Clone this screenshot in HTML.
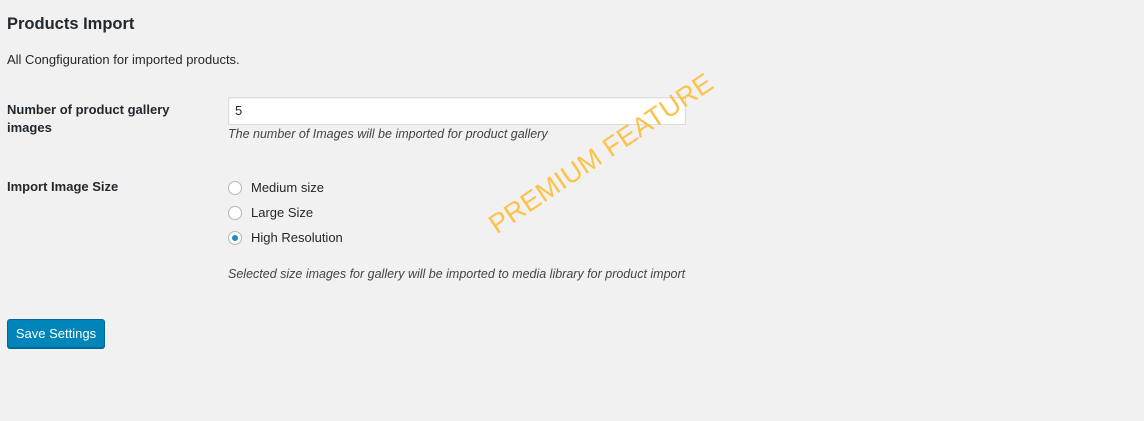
<!DOCTYPE html>
<html><head><meta charset="utf-8"><style>
body{margin:0;width:1144px;height:421px;background:#f1f1f1;font-family:"Liberation Sans",sans-serif;color:#23282d;position:relative;overflow:hidden;font-size:13px}
.a{position:absolute;white-space:nowrap}
h1{position:absolute;left:7px;top:15px;margin:0;font-size:16.5px;font-weight:600;color:#23282d}
.lbl{font-weight:bold;font-size:13px;line-height:18px;color:#23282d}
.desc{font-style:italic;font-size:12.5px;color:#444}
.inp{position:absolute;left:228px;top:97px;width:456px;height:26px;background:#fff;border:1px solid #ddd;box-shadow:inset 0 1px 2px rgba(0,0,0,.07)}
.r{position:absolute;left:228px;width:14px;height:14px;border-radius:50%;border:1px solid #b4b9be;background:#fff;box-sizing:border-box}
.btn{position:absolute;left:7px;top:319px;width:98px;height:29px;background:#0085ba;border:1px solid #006799;border-radius:3px;box-sizing:border-box;color:#fff;font-size:13px;text-align:center;line-height:27px;box-shadow:0 1px 0 #006799}
.wm{position:absolute;left:492px;color:#fcc24a;font-size:27px;transform:rotate(-34deg);transform-origin:left center;white-space:nowrap;letter-spacing:0.3px}
</style></head><body>
<h1>Products Import</h1>
<div class="a" style="left:7px;top:52px">All Congfiguration for imported products.</div>
<div class="a lbl" style="left:7px;top:101px">Number of product gallery<br>images</div>
<div class="inp"></div>
<div class="a" style="left:235px;top:103px;font-size:13px">5</div>
<div class="a desc" style="left:228px;top:127px">The number of Images will be imported for product gallery</div>
<div class="a lbl" style="left:7px;top:178px">Import Image Size</div>
<div class="r" style="top:181px"></div><div class="a" style="left:251px;top:180px">Medium size</div>
<div class="r" style="top:206px"></div><div class="a" style="left:251px;top:205px">Large Size</div>
<div class="r" style="top:231px"><div style="position:absolute;left:3px;top:3px;width:6px;height:6px;border-radius:50%;background:#1e8cbe"></div></div><div class="a" style="left:251px;top:230px">High Resolution</div>
<div class="a desc" style="left:228px;top:267px">Selected size images for gallery will be imported to media library for product import</div>
<div class="btn">Save Settings</div>
<div class="wm" style="top:212px">PREMIUM FEATURE</div>
</body></html>
